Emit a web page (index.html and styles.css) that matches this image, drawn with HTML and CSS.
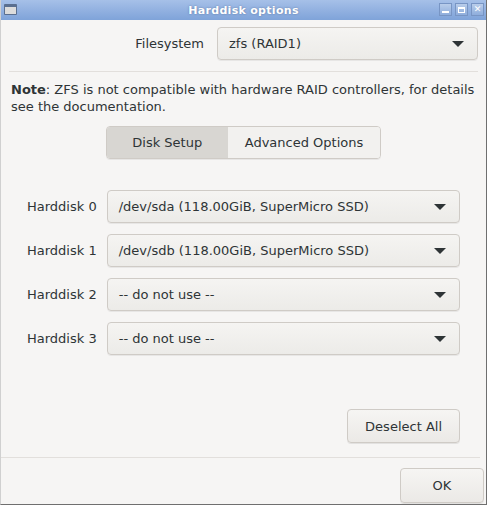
FILE: index.html
```html
<!DOCTYPE html>
<html lang="en">
<head>
  <meta charset="UTF-8">
  <title>Harddisk options</title>
  <link rel="stylesheet" href="styles.css">
</head>
<body>

  <div class="window">
    <!-- Title bar -->
    <div class="titlebar">
      <span class="win-icon"></span>
      <span class="title">Harddisk options</span>
      <div class="win-buttons">
        <span class="wbtn"><i class="min"></i></span>
        <span class="wbtn"><i class="max"></i></span>
        <span class="wbtn"><i class="close">&#x2715;</i></span>
      </div>
    </div>

    <div class="content">
      <!-- Filesystem -->
      <div class="fs-row">
        <label class="fs-label">Filesystem</label>
        <div class="combo fs-combo">
          <span>zfs (RAID1)</span>
          <span class="arrow"></span>
        </div>
      </div>

      <hr class="sep">

      <p class="note"><b>Note</b>: ZFS is not compatible with hardware RAID controllers, for details see the documentation.</p>

      <div class="tabs">
        <button class="tab active">Disk Setup</button>
        <button class="tab">Advanced Options</button>
      </div>

      <!-- Disks -->
      <div class="disks">
        <div class="disk-row">
          <label>Harddisk 0</label>
          <div class="combo"><span>/dev/sda (118.00GiB, SuperMicro SSD)</span><span class="arrow"></span></div>
        </div>
        <div class="disk-row">
          <label>Harddisk 1</label>
          <div class="combo"><span>/dev/sdb (118.00GiB, SuperMicro SSD)</span><span class="arrow"></span></div>
        </div>
        <div class="disk-row">
          <label>Harddisk 2</label>
          <div class="combo"><span>-- do not use --</span><span class="arrow"></span></div>
        </div>
        <div class="disk-row">
          <label>Harddisk 3</label>
          <div class="combo"><span>-- do not use --</span><span class="arrow"></span></div>
        </div>
      </div>

      <div class="deselect">
        <button class="btn">Deselect All</button>
      </div>
    </div>

    <hr class="sep bottom-sep">

    <div class="footer">
      <button class="btn ok">OK</button>
    </div>
  </div>

</body>
</html>
```

FILE: styles.css
```css
/* Reset */
* {
  margin: 0;
  padding: 0;
  box-sizing: border-box;
}

body {
  font-family: 'DejaVu Sans', sans-serif;
  font-size: 13px;
  color: #2e3436;
  background-color: #ffffff;
  width: 488px;
  height: 506px;
  overflow: hidden;
}

/* Window frame */
.window {
  width: 487px;
  height: 505px;
  background-color: #f6f5f4;
  border-right: 1px solid #6f6f6f;
  border-bottom: 1px solid #6f6f6f;
  border-left: 1px solid #d0d0d0;
  display: flex;
  flex-direction: column;
}

.titlebar {
  height: 20px;
  background: linear-gradient(#a6c0e8, #7fa3d9);
  display: flex;
  align-items: center;
  justify-content: center;
  position: relative;
}

.win-icon {
  position: absolute;
  left: 3px;
  top: 4px;
  width: 13px;
  height: 11px;
  background: #dcdcdc;
  border: 1px solid #5a6f90;
  border-top-width: 3px;
  border-radius: 1px;
}

.title {
  color: #ffffff;
  font-weight: bold;
  font-size: 11px;
  letter-spacing: 0.3px;
  text-shadow: 0 0 2px rgba(60, 80, 120, 0.6);
}

.win-buttons {
  position: absolute;
  right: 2px;
  top: 3px;
  display: flex;
  gap: 3px;
}

.wbtn {
  width: 13px;
  height: 13px;
  background: linear-gradient(#b9cdea, #8eaddc);
  border: 1px solid #7895c4;
  display: flex;
  align-items: center;
  justify-content: center;
}

.wbtn i {
  font-style: normal;
}

.wbtn .min {
  width: 7px;
  height: 2px;
  background: #fff;
  margin-top: 5px;
}

.wbtn .max {
  width: 7px;
  height: 6px;
  border: 1px solid #fff;
  border-top-width: 2px;
}

.wbtn .close {
  color: #fff;
  font-size: 9px;
  font-weight: bold;
  line-height: 1;
}

/* Content */
.content {
  flex: 1;
  padding: 0 8px;
  display: flex;
  flex-direction: column;
}

.fs-row {
  display: flex;
  align-items: center;
  justify-content: flex-end;
  gap: 13px;
  margin-top: 7px;
}

.combo {
  height: 33px;
  border: 1px solid #cfcbc6;
  border-radius: 4px;
  background: linear-gradient(#f5f4f2, #ecebe8);
  box-shadow: 0 1px 0 rgba(0, 0, 0, 0.06);
  display: flex;
  align-items: center;
  justify-content: space-between;
  padding: 0 13px 0 11px;
}

.fs-combo {
  width: 261px;
}

.arrow {
  width: 0;
  height: 0;
  border-left: 6px solid transparent;
  border-right: 6px solid transparent;
  border-top: 6px solid #2e3436;
}

.sep {
  border: none;
  border-top: 1px solid #e2dfdc;
  margin: 11px 0 0;
}

.note {
  margin-top: 9px;
  padding-left: 2px;
  line-height: 17px;
}

.tabs {
  display: flex;
  align-self: center;
  margin-top: 11px;
  border: 1px solid #cfcbc6;
  border-radius: 4px;
  overflow: hidden;
  box-shadow: 0 1px 0 rgba(0, 0, 0, 0.06);
}

.tab {
  font-family: inherit;
  font-size: 13px;
  color: #2e3436;
  height: 31px;
  border: none;
  background: #f2f1ef;
  padding: 0 17px;
}

.tab.active {
  background: #d8d6d2;
  width: 121px;
}

.disks {
  display: flex;
  flex-direction: column;
  gap: 11px;
  margin-top: 31px;
}

.disk-row {
  display: flex;
  align-items: center;
  gap: 10px;
  padding-left: 18px;
}

.disk-row .combo {
  width: 353px;
}

.deselect {
  display: flex;
  justify-content: flex-end;
  margin-top: auto;
  margin-bottom: 14px;
  padding-right: 18px;
}

.btn {
  font-family: inherit;
  font-size: 13px;
  color: #2e3436;
  height: 34px;
  border: 1px solid #cfcbc6;
  border-radius: 4px;
  background: linear-gradient(#f6f5f3, #ebe9e6);
  box-shadow: 0 1px 0 rgba(0, 0, 0, 0.08);
  padding: 0 17px;
}

.bottom-sep {
  margin: 0 6px 0 0;
}

.footer {
  display: flex;
  justify-content: flex-end;
  padding: 10px 2px 1px 0;
}

.btn.ok {
  width: 84px;
  height: 35px;
}
```
